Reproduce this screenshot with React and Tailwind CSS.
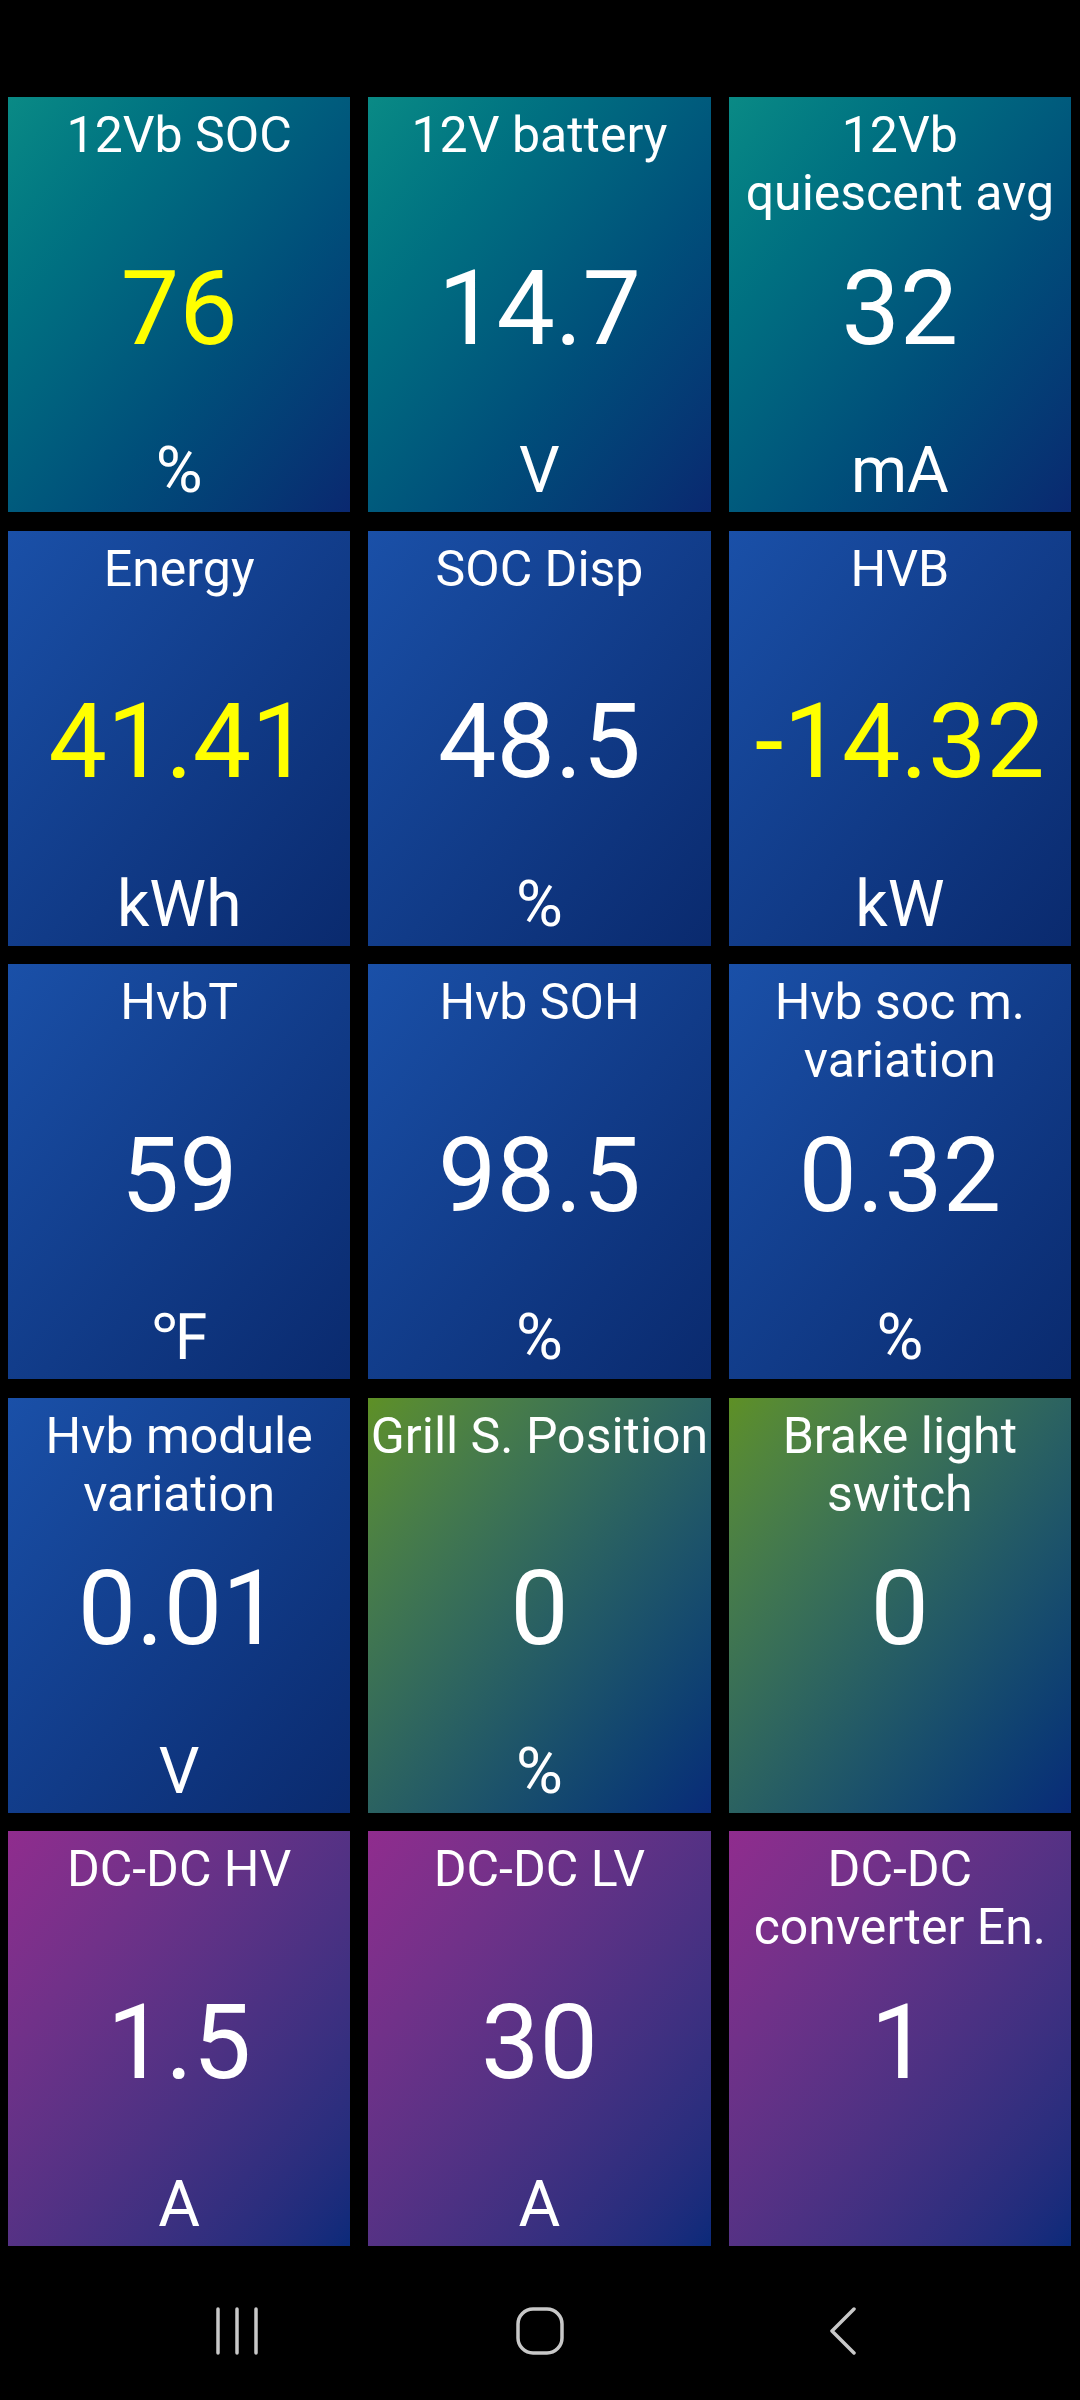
import React from "react";

const tiles = [
  { title: "12Vb SOC", value: "76", unit: "%", tone: "teal", hot: true },
  { title: "12V battery", value: "14.7", unit: "V", tone: "teal" },
  { title: "12Vb quiescent avg", value: "32", unit: "mA", tone: "teal" },
  { title: "Energy", value: "41.41", unit: "kWh", tone: "blue", hot: true },
  { title: "SOC Disp", value: "48.5", unit: "%", tone: "blue" },
  { title: "HVB", value: "-14.32", unit: "kW", tone: "blue", hot: true },
  { title: "HvbT", value: "59", unit: "℉", tone: "blue" },
  { title: "Hvb SOH", value: "98.5", unit: "%", tone: "blue" },
  { title: "Hvb soc m. variation", value: "0.32", unit: "%", tone: "blue" },
  { title: "Hvb module variation", value: "0.01", unit: "V", tone: "blue" },
  { title: "Grill S. Position", value: "0", unit: "%", tone: "green" },
  { title: "Brake light switch", value: "0", unit: "", tone: "green" },
  { title: "DC-DC HV", value: "1.5", unit: "A", tone: "purple" },
  { title: "DC-DC LV", value: "30", unit: "A", tone: "purple" },
  { title: "DC-DC converter En.", value: "1", unit: "", tone: "purple" },
];

const tones = {
  teal: "bg-linear-to-br from-[#0a8a85] to-[#0a2870]",
  blue: "bg-linear-to-br from-[#1a50a8] to-[#0a2a6e]",
  green: "bg-linear-to-br from-[#5e9024] to-[#0a2a78]",
  purple: "bg-linear-to-br from-[#902c8e] to-[#0a2a7a]",
};

function Tile({ title, value, unit, tone, hot }) {
  return (
    <div className={`h-[415px] flex flex-col text-white ${tones[tone]}`}>
      {/* Title */}
      <div className="h-[125px] pt-[9px] text-center text-[50px] leading-[58px]">
        {title}
      </div>
      {/* Value */}
      <div className="flex-1 flex items-center justify-center">
        <span
          className={`text-[104px] leading-none ${hot ? "text-[#ffff00]" : "text-white"}`}
        >
          {value}
        </span>
      </div>
      {/* Unit */}
      <div className="h-[117px] pb-[9px] flex items-end justify-center text-[64px] leading-none">
        {unit}
      </div>
    </div>
  );
}

function NavBar() {
  return (
    <div className="mt-[35px] h-[100px] flex items-center justify-center text-[#c8c8c8]">
      <div className="w-[303px] flex justify-center">
        <svg width="44" height="48" viewBox="0 0 44 48" fill="none" stroke="currentColor" strokeWidth="3.5" strokeLinecap="round">
          <line x1="3" y1="2" x2="3" y2="46" />
          <line x1="22" y1="2" x2="22" y2="46" />
          <line x1="41" y1="2" x2="41" y2="46" />
        </svg>
      </div>
      <div className="w-[303px] flex justify-center">
        <svg width="48" height="48" viewBox="0 0 48 48" fill="none" stroke="currentColor" strokeWidth="3.5">
          <rect x="2" y="2" width="44" height="44" rx="15" />
        </svg>
      </div>
      <div className="w-[303px] flex justify-center">
        <svg width="28" height="48" viewBox="0 0 28 48" fill="none" stroke="currentColor" strokeWidth="3.5" strokeLinecap="round" strokeLinejoin="round">
          <polyline points="25,2 3,24 25,46" />
        </svg>
      </div>
    </div>
  );
}

export default function App() {
  return (
    <div className="w-[1080px] h-[2400px] bg-black overflow-hidden font-['Roboto',sans-serif]">
      <div className="h-[97px]" />
      <div className="grid grid-cols-3 gap-x-[18px] gap-y-[18.5px] pl-[8px] pr-[9px]">
        {tiles.map((t) => (
          <Tile key={t.title} {...t} />
        ))}
      </div>
      <NavBar />
    </div>
  );
}
